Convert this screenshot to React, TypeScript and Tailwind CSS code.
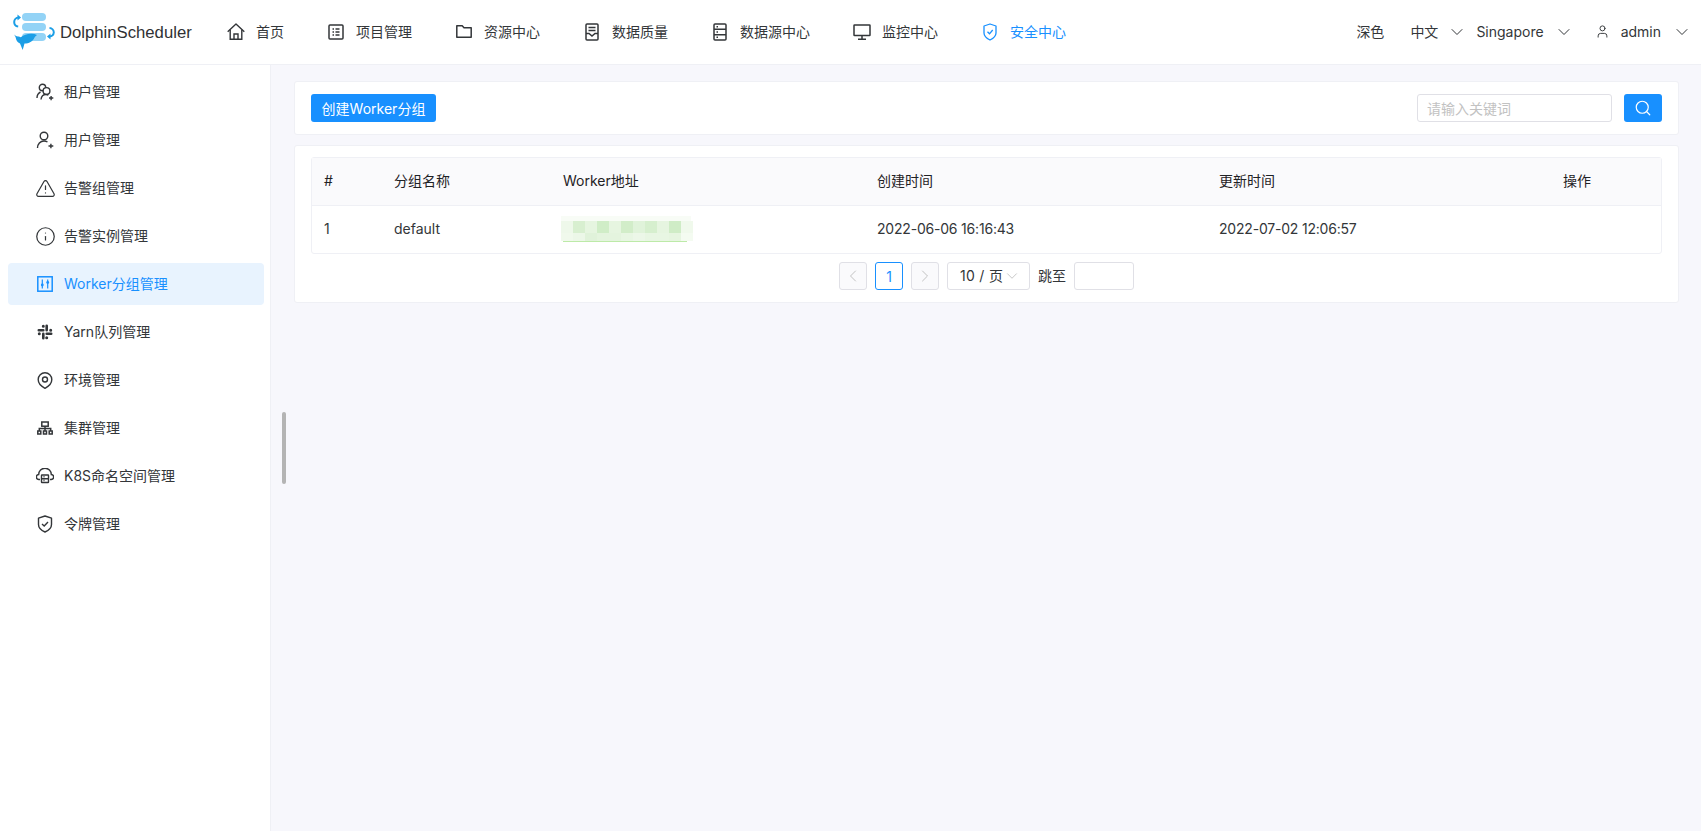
import React from "react";
import { ChevronDown, ChevronLeft, ChevronRight, Search, User, TriangleAlert, Info } from "lucide-react";

const font = "font-['Inter','Noto_Sans_CJK_SC',sans-serif]";

function HomeIcon() {
  return (
    <svg viewBox="0 0 18 17" className="w-[18px] h-[17px] shrink-0" fill="none" stroke="currentColor" strokeWidth="1.4">
      <path d="M.7 8.700 9 1l8.300 7.700" strokeLinejoin="round" />
      <path d="M3.200 6.800v9.500h11.600V6.800M7 16.300v-5.300h4v5.300" />
    </svg>
  );
}

function ProjectIcon() {
  return (
    <svg viewBox="0 0 16 16" className="w-4 h-4 shrink-0" fill="none" stroke="currentColor" strokeWidth="1.5">
      <rect x="1" y="1" width="14" height="14" rx="1" />
      <path d="M4.500 5h1.500M4.500 8h1.500M4.500 11h1.500M7.500 5h4M7.500 8h4M7.500 11h4" />
    </svg>
  );
}

function FolderIcon() {
  return (
    <svg viewBox="0 0 16 13" className="w-4 h-[13px] shrink-0" fill="none" stroke="currentColor" strokeWidth="1.5">
      <path d="M.8.800h5.400l1.800 2h7.200v9.400H.8z" strokeLinejoin="round" />
    </svg>
  );
}

function QualityIcon() {
  return (
    <svg viewBox="0 0 14 18" className="w-[14px] h-[18px] shrink-0" fill="none" stroke="currentColor" strokeWidth="1.5">
      <rect x="1" y="1" width="12" height="16" rx="1" />
      <path d="M3.500 4.500h7M3.500 7.500h7M1 10.500h3l3 2.500 3-2.500h3" />
    </svg>
  );
}

function ServerIcon() {
  return (
    <svg viewBox="0 0 14 18" className="w-[14px] h-[18px] shrink-0" fill="none" stroke="currentColor" strokeWidth="1.5">
      <rect x="1" y="1" width="12" height="16" rx="1" />
      <path d="M1 6.300h12M1 11.700h12M3.500 3.700h1.500M3.500 9h1.500M3.500 14.300h1.500" />
    </svg>
  );
}

function MonitorIcon() {
  return (
    <svg viewBox="0 0 18 16" className="w-[18px] h-4 shrink-0" fill="none" stroke="currentColor" strokeWidth="1.5">
      <rect x="1" y="1" width="16" height="10.500" rx="0.500" />
      <path d="M9 11.500v3.500M5 15.200h8" />
    </svg>
  );
}

function ShieldIcon() {
  return (
    <svg viewBox="0 0 14 18" className="w-[14px] h-[18px] shrink-0" fill="none" stroke="currentColor" strokeWidth="1.3">
      <path d="M7 1l6 2v7c0 3-3 5.500-6 7-3-1.500-6-4-6-7V3z" strokeLinejoin="round" />
      <path d="M4.500 8.800 6.500 10.800 9.700 7" />
    </svg>
  );
}

function TenantIcon() {
  return (
    <svg viewBox="0 0 18 18" className="w-[18px] h-[18px] shrink-0" fill="none" stroke="currentColor" strokeWidth="1.4">
      <circle cx="6.500" cy="4.500" r="3.200" />
      <circle cx="10.500" cy="8" r="3.400" fill="#fff" />
      <path d="M1 15c0-3 1.500-5 3.500-6M5 16.500c.3-2.800 2-5 5-5 1 0 1.800.2 2.400.6M13 15h4.300M15.100 12.900v4.300" />
    </svg>
  );
}

function UserAddIcon() {
  return (
    <svg viewBox="0 0 18 18" className="w-[18px] h-[18px] shrink-0" fill="none" stroke="currentColor" strokeWidth="1.4">
      <circle cx="8" cy="5" r="3.800" />
      <path d="M1.500 17c0-3.800 2.800-7 6.500-7 1.300 0 2.500.4 3.500 1M12.500 15h4.800M14.900 12.700v4.600" />
    </svg>
  );
}

function WorkerIcon() {
  return (
    <svg viewBox="0 0 16 16" className="w-4 h-4 shrink-0" fill="none" stroke="currentColor" strokeWidth="1.500">
      <rect x="0.800" y="0.800" width="14.400" height="14.400" />
      <path d="M5.300 3.500v9M10.700 3.500v9" strokeWidth="1.200" />
      <circle cx="5.300" cy="9" r="1.400" fill="currentColor" stroke="none" />
      <circle cx="10.700" cy="6.500" r="1.400" fill="currentColor" stroke="none" />
    </svg>
  );
}

function YarnIcon() {
  return (
    <svg viewBox="0 0 16 16" className="w-4 h-4 shrink-0" fill="none" stroke="currentColor" strokeWidth="2.600" strokeLinecap="round">
      <path d="M1.800 6.300h4.500M9.700 1.800v4.500M14.200 9.700H9.700M6.300 14.200V9.700" />
      <path d="M6.300 2.300v.01M13.700 6.300v.01M9.700 13.700v.01M2.300 9.700v.01" strokeWidth="3" />
    </svg>
  );
}

function PinIcon() {
  return (
    <svg viewBox="0 0 16 17" className="w-4 h-[17px] shrink-0" fill="none" stroke="currentColor" strokeWidth="1.4">
      <path d="M8 .8a6.800 6.800 0 0 1 6.800 6.800c0 4-3.800 7.200-6.800 8.700-3-1.500-6.800-4.700-6.800-8.700A6.800 6.800 0 0 1 8 .8z" strokeLinejoin="round" />
      <circle cx="8" cy="7.500" r="2.500" />
    </svg>
  );
}

function ClusterIcon() {
  return (
    <svg viewBox="0 0 16 14" className="w-4 h-[14px] shrink-0" fill="none" stroke="currentColor" strokeWidth="1.500">
      <rect x="4.800" y="1" width="6.400" height="4.200" />
      <path d="M8 5.200v2.300M2.300 10V7.500h11.400V10M8 7.500V10" />
      <rect x="0.800" y="10" width="3" height="3" />
      <rect x="6.500" y="10" width="3" height="3" />
      <rect x="12.200" y="10" width="3" height="3" />
    </svg>
  );
}

function K8sIcon() {
  return (
    <svg viewBox="0 0 18 16" className="w-[18px] h-4 shrink-0" fill="none" stroke="currentColor" strokeWidth="1.400">
      <path d="M4 11.500H3a2.500 2.500 0 0 1-.3-5A6.300 6.300 0 0 1 15.300 6.500a2.500 2.500 0 0 1-.3 5h-1" />
      <rect x="5.500" y="7" width="7" height="7.500" rx="0.500" />
      <path d="M5.500 10.700h7M7.500 8.800h1M7.500 12.500h1" />
    </svg>
  );
}

function TokenIcon() {
  return (
    <svg viewBox="0 0 16 18" className="w-4 h-[18px] shrink-0" fill="none" stroke="currentColor" strokeWidth="1.400">
      <path d="M8 1l6.500 2.200v6.300c0 3.500-3 6-6.500 7.500-3.500-1.500-6.500-4-6.500-7.500V3.200z" strokeLinejoin="round" />
      <path d="M5 9l2.200 2L11 7" />
    </svg>
  );
}

function Logo() {
  return (
    <svg viewBox="0 0 44 38" className="w-[44px] h-[38px] shrink-0">
      <rect x="10" y="0" width="24" height="8" rx="4" fill="#93d3f6" />
      <rect x="10" y="10" width="24" height="8" rx="4" fill="#93d3f6" />
      <rect x="10" y="20" width="24" height="8" rx="4" fill="#93d3f6" />
      <path d="M6.500 4.500a4.500 4.500 0 0 0-4.300 4.500 4.500 4.500 0 0 0 4 4.500" fill="none" stroke="#1b9ee6" strokeWidth="2" />
      <path d="M5.500 1.500l3.500 3-3.500 3z" fill="#1b9ee6" />
      <path d="M37.500 15a4.500 4.500 0 0 1 4.300 4.500 4.500 4.500 0 0 1-4.300 4" fill="none" stroke="#1b9ee6" strokeWidth="2" />
      <path d="M38.500 20.500l-3.500 3 3.500 3z" fill="#1b9ee6" />
      <path
        d="M2 21.500c1.500 1 2.500 2 4 2 1.200 0 1.800.2 2.800.7 2.700-2 6.200-3.200 10.200-3.400 2-.1 4 .2 6 1.200-1.200.8-2 1.500-2.500 2.500-1.800 4-5.500 6-10 6l-1.800 6.500-2.700-6.500C5.500 29.500 4 27 3.800 25 3.600 23.800 2.800 22.500 2 21.500z"
        fill="#1b9ee6"
      />
    </svg>
  );
}

const navItems: { icon: React.ReactNode; label: string; active?: boolean }[] = [
  { icon: <HomeIcon />, label: "首页" },
  { icon: <ProjectIcon />, label: "项目管理" },
  { icon: <FolderIcon />, label: "资源中心" },
  { icon: <QualityIcon />, label: "数据质量" },
  { icon: <ServerIcon />, label: "数据源中心" },
  { icon: <MonitorIcon />, label: "监控中心" },
  { icon: <ShieldIcon />, label: "安全中心", active: true },
];

const sideItems: { icon: React.ReactNode; label: string; active?: boolean }[] = [
  { icon: <TenantIcon />, label: "租户管理" },
  { icon: <UserAddIcon />, label: "用户管理" },
  { icon: <TriangleAlert className="w-[21px] h-[21px] shrink-0" strokeWidth={1.4} />, label: "告警组管理" },
  { icon: <Info className="w-[21px] h-[21px] shrink-0" strokeWidth={1.4} />, label: "告警实例管理" },
  { icon: <WorkerIcon />, label: "Worker分组管理", active: true },
  { icon: <YarnIcon />, label: "Yarn队列管理" },
  { icon: <PinIcon />, label: "环境管理" },
  { icon: <ClusterIcon />, label: "集群管理" },
  { icon: <K8sIcon />, label: "K8S命名空间管理" },
  { icon: <TokenIcon />, label: "令牌管理" },
];

const blurTop = ["#eef8ea", "#d8efd0", "#e6f5e0", "#d0edc7", "#e6f5e0", "#d2edc9", "#e0f3da", "#d6efce", "#e6f5e0", "#cfecc6", "#f0f9ec"];
const blurBottom = ["#f0f9ec", "#ecf7e8", "#e0f2da", "#e4f4de", "#e4f4de", "#e8f6e3", "#ecf7e8", "#e8f6e3", "#e8f6e3", "#e6f5e0", "#f4fbf1"];

const gridCols = "grid grid-cols-[70px_169px_314px_342px_344px_1fr]";

export default function App() {
  return (
    <div className={`${font} h-[831px] w-full bg-[#f7f7fc] text-[14px] text-[#333639] flex flex-col overflow-hidden`}>
      <header className="h-[65px] shrink-0 bg-white border-b border-[#eff0f5] flex items-center">
        <div className="flex items-center pl-3 w-[227px] shrink-0">
          <Logo />
          <span className="ml-[4px] pt-[2px] font-['Liberation_Sans',sans-serif] text-[16.700px] text-[#303133]">DolphinScheduler</span>
        </div>
        <nav className="flex items-center gap-[43px] pb-[1px]">
          {navItems.map((item) => (
            <div key={item.label} className={`flex items-center ${item.active ? "text-[#1890ff]" : "text-[#333639]"}`}>
              <span className="w-[18px] flex justify-center mr-[11px]">{item.icon}</span>
              <span className="leading-none">{item.label}</span>
            </div>
          ))}
        </nav>
        <div className="ml-auto flex items-center pr-[9px] pb-[1px]">
          <span className="mr-[26px]">深色</span>
          <span>中文</span>
          <ChevronDown className="w-5 h-5 ml-[9px] mr-[9px]" strokeWidth={1.2} />
          <span>Singapore</span>
          <ChevronDown className="w-5 h-5 ml-[10px] mr-[21px]" strokeWidth={1.2} />
          <User className="w-[15px] h-[15px] mr-[11px]" strokeWidth={1.5} />
          <span>admin</span>
          <ChevronDown className="w-5 h-5 ml-[11px]" strokeWidth={1.2} />
        </div>
      </header>

      <div className="flex flex-1 min-h-0">
        <aside className="relative w-[271px] shrink-0 bg-white border-r border-[#eff0f5] pt-[6px]">
          {sideItems.map((item) => (
            <div
              key={item.label}
              className={`h-[42px] mb-[6px] mx-2 w-[256px] rounded flex items-center pl-7 ${
                item.active ? "bg-[#e8f3fe] text-[#1890ff]" : ""
              }`}
            >
              <span className="w-[18px] flex justify-center mr-[10px]">{item.icon}</span>
              <span className="pb-[2px]">{item.label}</span>
            </div>
          ))}
          <div className="absolute left-[282px] top-[347px] w-1 h-[72px] rounded bg-[#b4b4b4]" />
        </aside>

        <main className="flex-1 min-w-0 pt-4 pl-[23px] pr-[22px]">
          <section className="h-[54px] bg-white border border-[#eff0f5] rounded-[3px] flex items-center justify-between px-4">
            <button className="h-7 w-[125px] bg-[#1890ff] text-white rounded-[3px]">创建Worker分组</button>
            <div className="flex items-center gap-3">
              <div className="w-[195px] h-7 border border-[#e0e0e6] rounded-[3px] px-[9px] flex items-center text-[#c2c2c2]">
                请输入关键词
              </div>
              <button className="w-[38px] h-7 bg-[#1890ff] text-white rounded-[3px] flex items-center justify-center">
                <Search className="w-[18px] h-[18px]" strokeWidth={1.6} />
              </button>
            </div>
          </section>

          <section className="mt-[10px] h-[158px] bg-white border border-[#eff0f5] rounded-[3px] pt-[11px] px-4">
            <div className="border border-[#eff0f5] rounded-[3px]">
              <div className={`${gridCols} h-[48px] pb-[2px] items-center bg-[#fafafc] border-b border-[#eff0f5] text-[#1f2225]`}>
                <span className="pl-3">#</span>
                <span className="pl-3">分组名称</span>
                <span className="pl-3">Worker地址</span>
                <span className="pl-3">创建时间</span>
                <span className="pl-3">更新时间</span>
                <span className="pl-3">操作</span>
              </div>
              <div className={`${gridCols} h-[47px] pb-[2px] items-center`}>
                <span className="pl-3">1</span>
                <span className="pl-3">default</span>
                <div className="pl-[10px]">
                  <div className="w-[132px] h-[26px] flex flex-col overflow-hidden">
                    <div className="h-[5px] w-[130px] bg-[#f8fcf6]" />
                    <div className="flex h-[12px]">
                      {blurTop.map((c, i) => (
                        <div key={i} className="w-3 h-full" style={{ backgroundColor: c }} />
                      ))}
                    </div>
                    <div className="flex h-[8px]">
                      {blurBottom.map((c, i) => (
                        <div key={i} className="w-3 h-full" style={{ backgroundColor: c }} />
                      ))}
                    </div>
                    <div className="h-px w-[124px] ml-[2px] bg-[#bdeaa8]" />
                  </div>
                </div>
                <span className="pl-3 tracking-[-0.2px]">2022-06-06 16:16:43</span>
                <span className="pl-3 tracking-[-0.2px]">2022-07-02 12:06:57</span>
                <span />
              </div>
            </div>
            <div className="mt-2 flex items-center justify-center h-7">
              <div className="w-7 h-7 border border-[#e0e0e6] bg-[#fafafc] rounded-[3px] flex items-center justify-center text-[#c2c2c2]">
                <ChevronLeft className="w-5 h-5" strokeWidth={1.2} />
              </div>
              <div className="ml-2 w-7 h-7 border border-[#1890ff] rounded-[3px] flex items-center justify-center text-[#1890ff]">
                1
              </div>
              <div className="ml-2 w-7 h-7 border border-[#e0e0e6] bg-[#fafafc] rounded-[3px] flex items-center justify-center text-[#c2c2c2]">
                <ChevronRight className="w-5 h-5" strokeWidth={1.2} />
              </div>
              <div className="ml-2 w-[83px] h-7 border border-[#e0e0e6] rounded-[3px] flex items-center pl-3">
                <span className="tracking-[0.3px] pb-[2px]">10 / 页</span>
                <ChevronDown className="w-[18px] h-[18px] text-[#c2c2c2]" strokeWidth={1.2} />
              </div>
              <span className="ml-2 pb-[2px]">跳至</span>
              <div className="ml-2 w-[60px] h-7 border border-[#e0e0e6] rounded-[3px]" />
            </div>
          </section>
        </main>
      </div>
    </div>
  );
}
